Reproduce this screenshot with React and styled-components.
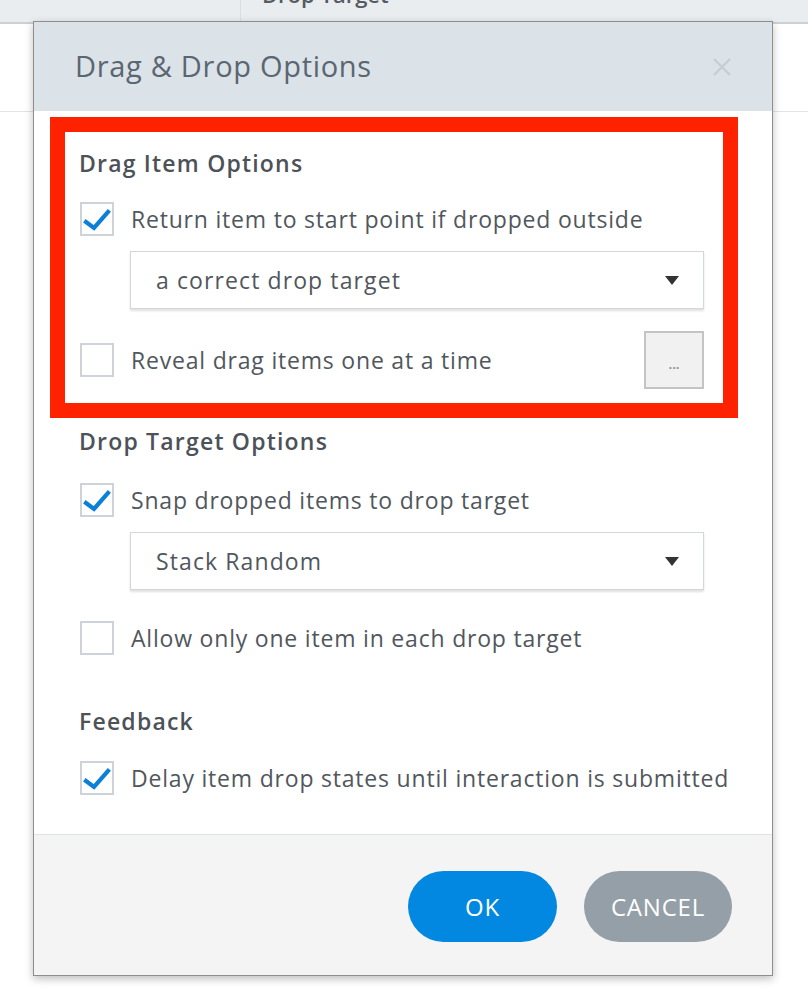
import React from 'react';
import styled, { createGlobalStyle } from 'styled-components';

const GlobalStyle = createGlobalStyle`
  body {
    margin: 0;
    background: #ffffff;
    font-family: "Open Sans", "Noto Sans", sans-serif;
  }
`;

/* page behind the dialog */
const Page = styled.div`
  position: relative;
  width: 808px;
  height: 999px;
  overflow: hidden;
  background: #ffffff;
`;
const TopBar = styled.div`
  display: flex;
  height: 22px;
  background: #eaedf0;
  border-bottom: 2px solid #cdd1d5;
  overflow: hidden;
`;
const TopCell = styled.div`
  width: ${p => p.$width || 'auto'};
  flex: ${p => (p.$width ? 'none' : '1')};
  border-right: ${p => (p.$divider ? '1px solid #dadee2' : 'none')};
  padding-left: ${p => p.$pad || '0px'};
  font-size: 22px;
  font-weight: 600;
  color: #555b61;
  line-height: 30px;
  margin-top: -21px;
`;
const SubBar = styled.div`
  height: 87px;
  border-bottom: 1px solid #e1e4e7;
`;

/* dialog */
const Dialog = styled.div`
  position: absolute;
  left: 33px;
  top: 21px;
  width: 740px;
  height: 955px;
  box-sizing: border-box;
  border: 1px solid #8e8e8e;
  box-shadow: 0 3px 8px rgba(0, 0, 0, 0.25);
  background: #ffffff;
  display: flex;
  flex-direction: column;
`;
const Header = styled.div`
  height: 89px;
  flex: none;
  background: #dbe2e8;
  display: flex;
  align-items: center;
  justify-content: space-between;
  padding: 0 40px 0 41px;
`;
const Title = styled.div`
  font-size: 29px;
  color: #5a6671;
  letter-spacing: 0.7px;
  margin-top: -2px;
`;
const CloseButton = styled.div`
  width: 20px;
  height: 20px;
  display: flex;
`;
const Body = styled.div`
  flex: 1;
  padding: 6px 0 0 16px;
`;
const Section = styled.div`
  width: 688px;
  box-sizing: border-box;
  border: ${p => (p.$highlight ? '15px solid #ff2200' : 'none')};
  padding: ${p => (p.$highlight ? '16px 19px 14px 15px' : '8px 34px 0 30px')};
  margin-top: ${p => p.$mt || '0px'};
`;
const SectionTitle = styled.div`
  font-size: 23px;
  line-height: 30px;
  font-weight: 600;
  letter-spacing: 1.2px;
  color: #4c5258;
  margin-left: -1px;
`;
const CheckRow = styled.div`
  display: flex;
  align-items: center;
  gap: 17px;
  min-height: 34px;
  margin-top: ${p => p.$mt || '25px'};
`;
const Box = styled.div`
  width: 34px;
  height: 34px;
  flex: none;
  box-sizing: border-box;
  border: 2px solid #cdd3d9;
  background: #ffffff;
`;
const Label = styled.div`
  flex: 1;
  font-size: 23px;
  letter-spacing: 0.8px;
  color: #51575d;
  white-space: nowrap;
`;
const SelectBox = styled.div`
  margin: 15px 0 0 50px;
  height: 58px;
  box-sizing: border-box;
  border: 1px solid #d3d7db;
  box-shadow: 0 2px 2px rgba(0, 0, 0, 0.12);
  display: flex;
  align-items: center;
  justify-content: space-between;
  padding: 0 24px 0 25px;
  font-size: 23px;
  letter-spacing: 1.1px;
  color: #51575d;
`;
const MoreButton = styled.div`
  width: 60px;
  height: 58px;
  box-sizing: border-box;
  border: 2px solid #c4c4c4;
  background: #f1f1f1;
  color: #8a98a8;
  font-size: 13px;
  font-weight: 700;
  display: flex;
  align-items: center;
  justify-content: center;
  padding-top: 8px;
`;
const Footer = styled.div`
  height: 141px;
  flex: none;
  box-sizing: border-box;
  border-top: 1px solid #dde3e8;
  background: #f4f4f4;
  display: flex;
  justify-content: flex-end;
  align-items: flex-start;
  gap: 27px;
  padding: 36px 40px 0 0;
`;
const PillButton = styled.div`
  width: ${p => p.$width};
  height: 71px;
  border-radius: 36px;
  background: ${p => p.$bg};
  color: #ffffff;
  font-size: 24px;
  letter-spacing: 0.8px;
  display: flex;
  align-items: center;
  justify-content: center;
`;

const Check = ({ checked }) => (
  <Box>
    {checked && (
      <svg width="30" height="30" viewBox="0 0 30 30">
        <polyline points="4,18 12,24 26,8" fill="none" stroke="#0b80d6" strokeWidth="4.2" strokeLinecap="square" />
      </svg>
    )}
  </Box>
);

const Arrow = () => (
  <svg width="14" height="9" viewBox="0 0 14 9">
    <polygon points="0,0 14,0 7,9" fill="#333" />
  </svg>
);

export default function App() {
  return (
    <Page>
      <GlobalStyle />
      <TopBar>
        <TopCell $width="240px" $divider />
        <TopCell $pad="21px">Drop Target</TopCell>
      </TopBar>
      <SubBar />

      <Dialog>
        <Header>
          <Title>Drag &amp; Drop Options</Title>
          <CloseButton>
            <svg width="20" height="20" viewBox="0 0 20 20">
              <path d="M2 2 L18 18 M18 2 L2 18" stroke="#c8cdd2" strokeWidth="2.4" />
            </svg>
          </CloseButton>
        </Header>

        <Body>
          <Section $highlight>
            <SectionTitle>Drag Item Options</SectionTitle>
            <CheckRow $mt="24px">
              <Check checked />
              <Label>Return item to start point if dropped outside</Label>
            </CheckRow>
            <SelectBox>
              a correct drop target
              <Arrow />
            </SelectBox>
            <CheckRow $mt="22px">
              <Check />
              <Label>Reveal drag items one at a time</Label>
              <MoreButton>...</MoreButton>
            </CheckRow>
          </Section>

          <Section>
            <SectionTitle>Drop Target Options</SectionTitle>
            <CheckRow $mt="27px">
              <Check checked />
              <Label>Snap dropped items to drop target</Label>
            </CheckRow>
            <SelectBox>
              Stack Random
              <Arrow />
            </SelectBox>
            <CheckRow $mt="31px">
              <Check />
              <Label>Allow only one item in each drop target</Label>
            </CheckRow>
          </Section>

          <Section $mt="43px">
            <SectionTitle>Feedback</SectionTitle>
            <CheckRow>
              <Check checked />
              <Label>Delay item drop states until interaction is submitted</Label>
            </CheckRow>
          </Section>
        </Body>

        <Footer>
          <PillButton $width="149px" $bg="#0288e0">OK</PillButton>
          <PillButton $width="148px" $bg="#949fa7">CANCEL</PillButton>
        </Footer>
      </Dialog>
    </Page>
  );
}
